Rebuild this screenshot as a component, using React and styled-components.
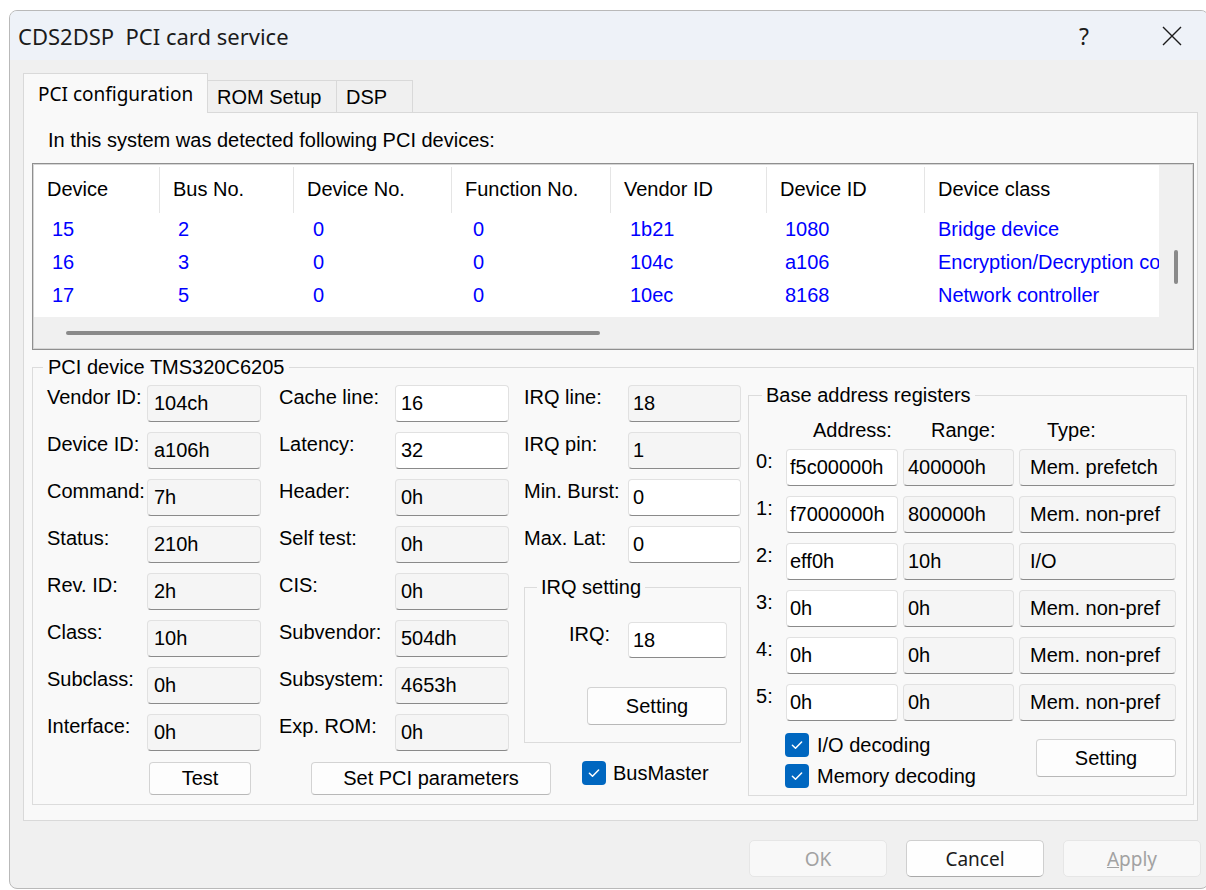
import React from "react";
import styled, { createGlobalStyle } from "styled-components";

const devices = [
  ["15", "2", "0", "0", "1b21", "1080", "Bridge device"],
  ["16", "3", "0", "0", "104c", "a106", "Encryption/Decryption controller"],
  ["17", "5", "0", "0", "10ec", "8168", "Network controller"],
];

const listColumns = [
  { title: "Device", width: 126, pad: 18 },
  { title: "Bus No.", width: 134, pad: 18 },
  { title: "Device No.", width: 158, pad: 19 },
  { title: "Function No.", width: 159, pad: 21 },
  { title: "Vendor ID", width: 156, pad: 19 },
  { title: "Device ID", width: 158, pad: 18 },
  { title: "Device class", width: 420, pad: 13 },
];

const configColumns = [
  {
    labelWidth: 100,
    fieldWidth: 114,
    rows: [
      ["Vendor ID:", "104ch"],
      ["Device ID:", "a106h"],
      ["Command:", "7h"],
      ["Status:", "210h"],
      ["Rev. ID:", "2h"],
      ["Class:", "10h"],
      ["Subclass:", "0h"],
      ["Interface:", "0h"],
    ],
  },
  {
    labelWidth: 116,
    fieldWidth: 114,
    rows: [
      ["Cache line:", "16", true],
      ["Latency:", "32", true],
      ["Header:", "0h"],
      ["Self test:", "0h"],
      ["CIS:", "0h"],
      ["Subvendor:", "504dh"],
      ["Subsystem:", "4653h"],
      ["Exp. ROM:", "0h"],
    ],
  },
];

const irqRows = [
  ["IRQ line:", "18"],
  ["IRQ pin:", "1"],
  ["Min. Burst:", "0", true],
  ["Max. Lat:", "0", true],
];

const baseRegisters = [
  ["f5c00000h", "400000h", "Mem. prefetch"],
  ["f7000000h", "800000h", "Mem. non-pref"],
  ["eff0h", "10h", "I/O"],
  ["0h", "0h", "Mem. non-pref"],
  ["0h", "0h", "Mem. non-pref"],
  ["0h", "0h", "Mem. non-pref"],
];

const GlobalStyle = createGlobalStyle`
  html, body {
    margin: 0;
    padding: 0;
    background: #ffffff;
  }
  body {
    font-family: "Liberation Sans", Arial, sans-serif;
    font-size: 20px;
    color: #000;
  }
`;

const Page = styled.div`
  width: 1206px;
  height: 890px;
  box-sizing: border-box;
  padding: 10px 0 0 9px;
  overflow: hidden;
  background: #ffffff;
`;

const Window = styled.div`
  width: 1200px;
  height: 879px;
  box-sizing: border-box;
  border: 1px solid #b9b9b9;
  border-radius: 8px;
  background: #f0f0f0;
  overflow: hidden;
  display: flex;
  flex-direction: column;
`;

const TitleBar = styled.div`
  height: 49px;
  flex-shrink: 0;
  display: flex;
  align-items: center;
  background: #eef2f8;
  padding-left: 8px;
`;

const TitleText = styled.div`
  flex: 1;
  font-family: "Noto Sans", "Liberation Sans", sans-serif;
  font-size: 22px;
  white-space: pre;
  color: #1b1b1b;
`;

const CaptionButton = styled.div`
  width: 72px;
  height: 49px;
  margin-right: ${(p) => p.$gap || 0}px;
  display: flex;
  align-items: center;
  justify-content: center;
  font-family: "Noto Sans", "Liberation Sans", sans-serif;
  font-size: 23px;
  color: #1b1b1b;
`;

const Body = styled.div`
  flex: 1;
  padding: 13px 10px 0 13px;
  display: flex;
  flex-direction: column;
`;

const TabStrip = styled.div`
  height: 40px;
  display: flex;
  align-items: flex-end;
  margin-bottom: -1px;
  position: relative;
  z-index: 1;
`;

const Tab = styled.div`
  box-sizing: border-box;
  width: ${(p) => p.$w}px;
  height: ${(p) => (p.$active ? 40 : 33)}px;
  padding: ${(p) => (p.$active ? "8px 0 0 14px" : "4px 0 0 9px")};
  border: 1px solid #d9d9d9;
  border-left: ${(p) => (p.$active ? "1px solid #d9d9d9" : "none")};
  border-bottom: ${(p) => (p.$active ? "none" : "1px solid #d9d9d9")};
  background: ${(p) => (p.$active ? "#f9f9f9" : "#f0f0f0")};
  font-family: ${(p) =>
    p.$active
      ? `"Noto Sans", "Liberation Sans", sans-serif`
      : `"Liberation Sans", Arial, sans-serif`};
  font-size: ${(p) => (p.$active ? 19 : 20)}px;
  line-height: 24px;
  white-space: nowrap;
`;

const TabPanel = styled.div`
  border: 1px solid #d9d9d9;
  background: #f9f9f9;
  padding: 15px 3px 15px 8px;
  display: flex;
  flex-direction: column;
`;

const Caption = styled.div`
  padding-left: 16px;
  line-height: 24px;
  margin-bottom: 11px;
`;

const ListBox = styled.div`
  height: 187px;
  box-sizing: border-box;
  border: 1px solid #8f8f8f;
  padding: 1px;
  background: #d6d6d6;
  display: flex;
  flex-direction: column;
`;

const ListTop = styled.div`
  height: 152px;
  display: flex;
`;

const ListContent = styled.div`
  flex: 1;
  background: #ffffff;
  overflow: hidden;
`;

const ListGrid = styled.div`
  display: grid;
  grid-template-columns: ${listColumns.map((c) => `${c.width}px`).join(" ")};
  grid-auto-rows: 33px;
  grid-template-rows: 48px;
`;

const HeaderCell = styled.div`
  position: relative;
  padding-left: 13px;
  display: flex;
  align-items: center;
  white-space: nowrap;

  &::after {
    content: "";
    position: absolute;
    right: 0;
    top: 2px;
    bottom: 0;
    width: 1px;
    background: #e5e5e5;
  }
`;

const DataCell = styled.div`
  padding-left: ${(p) => p.$pad}px;
  line-height: 33px;
  color: #0000ff;
  white-space: nowrap;
`;

const VScroll = styled.div`
  width: 33px;
  background: #f0f0f0;
  display: flex;
  justify-content: center;
  padding-top: 85px;
  box-sizing: border-box;
`;

const VThumb = styled.div`
  width: 4px;
  height: 34px;
  border-radius: 2px;
  background: #8a8a8a;
`;

const HScroll = styled.div`
  flex: 1;
  background: #f0f0f0;
  padding: 14px 0 0 32px;
  box-sizing: border-box;
`;

const HThumb = styled.div`
  width: 534px;
  height: 4px;
  border-radius: 2px;
  background: #8a8a8a;
`;

const GroupBox = styled.fieldset`
  margin: ${(p) => p.$margin || 0};
  padding: ${(p) => p.$pad};
  width: ${(p) => (p.$w ? `${p.$w}px` : "auto")};
  box-sizing: border-box;
  border: 1px solid #dcdcdc;
  min-width: 0;
  flex-shrink: 0;
`;

const GroupTitle = styled.legend`
  padding: 0 ${(p) => p.$padX || 4}px;
  margin-left: ${(p) => p.$offset}px;
  line-height: 24px;
  font-size: 20px;
  white-space: nowrap;
`;

const DeviceArea = styled.div`
  display: flex;
  gap: 7px;
`;

const LeftArea = styled.div`
  width: 694px;
  display: flex;
  flex-direction: column;
`;

const FieldColumns = styled.div`
  display: grid;
  grid-template-columns: 232px 245px 217px;
  align-items: start;
`;

const FieldColumn = styled.div`
  display: flex;
  flex-direction: column;
  gap: 10px;
`;

const FieldRow = styled.div`
  display: flex;
  align-items: flex-start;
  justify-content: ${(p) => (p.$end ? "flex-end" : "flex-start")};
  gap: ${(p) => p.$gap || 0}px;
`;

const FieldLabel = styled.span`
  width: ${(p) => (p.$w ? `${p.$w}px` : "auto")};
  flex-shrink: 0;
  line-height: 24px;
  white-space: nowrap;
`;

const Field = styled.div`
  width: ${(p) => p.$w}px;
  height: ${(p) => p.$h || 37}px;
  flex-shrink: 0;
  box-sizing: border-box;
  padding-left: ${(p) => p.$pad || 5}px;
  border: 1px solid #e1e1e1;
  border-bottom: 1px solid #8a8a8a;
  border-radius: 4px;
  background: ${(p) => (p.$edit ? "#ffffff" : "#f5f5f5")};
  display: flex;
  align-items: center;
  white-space: nowrap;
  overflow: hidden;
`;

const PushButton = styled.button`
  width: ${(p) => p.$w}px;
  height: ${(p) => p.$h || 33}px;
  margin: ${(p) => p.$margin || 0};
  padding: 0;
  box-sizing: border-box;
  border: 1px solid #d3d3d3;
  border-bottom-color: #b8b8b8;
  border-radius: 4px;
  background: #fdfdfd;
  font-family: "Liberation Sans", Arial, sans-serif;
  font-size: 20px;
  color: #000;
  flex-shrink: 0;
`;

const ButtonRow = styled.div`
  margin-top: 11px;
  padding-left: 102px;
  display: flex;
  align-items: flex-start;
`;

const CheckRow = styled.label`
  display: flex;
  align-items: center;
  gap: ${(p) => p.$gap || 8}px;
  margin: ${(p) => p.$margin || 0};
  line-height: 24px;
  white-space: nowrap;
`;

const CheckBox = styled.span`
  width: 24px;
  height: 24px;
  flex-shrink: 0;
  border-radius: 4px;
  background: #0067c0;
  display: inline-flex;
  align-items: center;
  justify-content: center;
`;

const IrqBox = styled.div`
  display: flex;
  flex-direction: column;
  align-items: flex-end;
`;

const BarHeader = styled.div`
  display: flex;
  padding-left: 30px;
  gap: 5px;
  line-height: 24px;
  margin-bottom: 7px;
`;

const BarHeadCell = styled.div`
  width: ${(p) => p.$w}px;
  padding-left: ${(p) => p.$pad}px;
  box-sizing: border-box;
`;

const BarRows = styled.div`
  display: flex;
  flex-direction: column;
  gap: 10px;
`;

const BarFooter = styled.div`
  margin-top: 12px;
  padding-left: 29px;
  display: flex;
  align-items: flex-start;
`;

const CheckList = styled.div`
  display: flex;
  flex-direction: column;
  gap: 7px;
`;

const DialogButtons = styled.div`
  margin: 19px -3px 0 0;
  display: flex;
  justify-content: flex-end;
  gap: 19px;
`;

const DialogButton = styled.button`
  width: 138px;
  height: 37px;
  padding: 0;
  box-sizing: border-box;
  border: 1px solid ${(p) => (p.disabled ? "#e6e6e6" : "#cfcfcf")};
  border-bottom-color: ${(p) => (p.disabled ? "#e6e6e6" : "#a9a9a9")};
  border-radius: 5px;
  background: ${(p) => (p.disabled ? "#f8f8f8" : "#fefefe")};
  color: ${(p) => (p.disabled ? "#a2a2a2" : "#1b1b1b")};
  font-family: "Noto Sans", "Liberation Sans", sans-serif;
  font-size: 19px;
`;

const Tick = () => (
  <svg width="16" height="16" viewBox="0 0 16 16">
    <path
      d="M3.4 8.3 L6.5 11.2 L12.6 5"
      fill="none"
      stroke="#ffffff"
      strokeWidth="1.5"
      strokeLinecap="round"
      strokeLinejoin="round"
    />
  </svg>
);

const Check = ({ children, gap, margin }) => (
  <CheckRow $gap={gap} $margin={margin}>
    <CheckBox>
      <Tick />
    </CheckBox>
    {children}
  </CheckRow>
);

const CloseGlyph = () => (
  <svg width="20" height="20" viewBox="0 0 20 20">
    <path d="M1 1 L19 19 M19 1 L1 19" stroke="#1b1b1b" strokeWidth="1.4" />
  </svg>
);

const DeviceList = () => (
  <ListBox>
    <ListTop>
      <ListContent>
        <ListGrid>
          {listColumns.map((c) => (
            <HeaderCell key={c.title}>{c.title}</HeaderCell>
          ))}
          {devices.map((row) =>
            row.map((value, i) => (
              <DataCell key={`${row[0]}-${i}`} $pad={listColumns[i].pad}>
                {value}
              </DataCell>
            ))
          )}
        </ListGrid>
      </ListContent>
      <VScroll>
        <VThumb />
      </VScroll>
    </ListTop>
    <HScroll>
      <HThumb />
    </HScroll>
  </ListBox>
);

const BaseAddressGroup = () => (
  <GroupBox $w={439} $pad="11px 9px 7px 7px" $margin="-2px 0 0 0">
    <GroupTitle $offset={6}>Base address registers</GroupTitle>
    <BarHeader>
      <BarHeadCell $w={112} $pad={27}>Address:</BarHeadCell>
      <BarHeadCell $w={111} $pad={28}>Range:</BarHeadCell>
      <BarHeadCell $w={157} $pad={28}>Type:</BarHeadCell>
    </BarHeader>
    <BarRows>
      {baseRegisters.map(([addr, range, type], i) => (
        <FieldRow key={i} $gap={5}>
          <FieldLabel $w={25}>{i}:</FieldLabel>
          <Field $w={112} $edit $pad={3}>
            {addr}
          </Field>
          <Field $w={111} $pad={4}>{range}</Field>
          <Field $w={157} $pad={10}>{type}</Field>
        </FieldRow>
      ))}
    </BarRows>
    <BarFooter>
      <CheckList>
        <Check>I/O decoding</Check>
        <Check>Memory decoding</Check>
      </CheckList>
      <PushButton $w={140} $h={38} $margin="6px 1px 0 auto">
        Setting
      </PushButton>
    </BarFooter>
  </GroupBox>
);

export default function App() {
  return (
    <Page>
      <GlobalStyle />
      <Window>
        <TitleBar>
          <TitleText>CDS2DSP  PCI card service</TitleText>
          <CaptionButton $gap={16}>?</CaptionButton>
          <CaptionButton>
            <CloseGlyph />
          </CaptionButton>
        </TitleBar>
        <Body>
          <TabStrip>
            <Tab $active $w={185}>
              PCI configuration
            </Tab>
            <Tab $w={129}>ROM Setup</Tab>
            <Tab $w={76}>DSP</Tab>
          </TabStrip>
          <TabPanel>
            <Caption>In this system was detected following PCI devices:</Caption>
            <DeviceList />
            <GroupBox $pad="6px 7px 8px 14px" $margin="5px 0 0 0">
              <GroupTitle $offset={-4} $padX={5}>
                PCI device TMS320C6205
              </GroupTitle>
              <DeviceArea>
                <LeftArea>
                  <FieldColumns>
                    {configColumns.map((col, ci) => (
                      <FieldColumn key={ci}>
                        {col.rows.map(([label, value, edit]) => (
                          <FieldRow key={label}>
                            <FieldLabel $w={col.labelWidth}>{label}</FieldLabel>
                            <Field $w={col.fieldWidth} $edit={edit} $pad={ci ? 5 : 6}>
                              {value}
                            </Field>
                          </FieldRow>
                        ))}
                      </FieldColumn>
                    ))}
                    <FieldColumn>
                      {irqRows.map(([label, value, edit]) => (
                        <FieldRow key={label}>
                          <FieldLabel $w={104}>{label}</FieldLabel>
                          <Field $w={113} $edit={edit} $pad={4}>
                            {value}
                          </Field>
                        </FieldRow>
                      ))}
                      <GroupBox $pad="23px 13px 17px 13px" $margin="2px 0 0 0">
                        <GroupTitle $offset={-1}>IRQ setting</GroupTitle>
                        <IrqBox>
                          <FieldRow $end $gap={18}>
                            <FieldLabel>IRQ:</FieldLabel>
                            <Field $w={99} $h={36} $edit $pad={4}>
                              18
                            </Field>
                          </FieldRow>
                          <PushButton $w={140} $h={38} $margin="29px 0 0 0">
                            Setting
                          </PushButton>
                        </IrqBox>
                      </GroupBox>
                    </FieldColumn>
                  </FieldColumns>
                  <ButtonRow>
                    <PushButton $w={102}>Test</PushButton>
                    <PushButton $w={240} $margin="0 0 0 60px">
                      Set PCI parameters
                    </PushButton>
                    <Check gap={7} margin="-1px 0 0 31px">
                      BusMaster
                    </Check>
                  </ButtonRow>
                </LeftArea>
                <BaseAddressGroup />
              </DeviceArea>
            </GroupBox>
          </TabPanel>
          <DialogButtons>
            <DialogButton disabled>OK</DialogButton>
            <DialogButton>Cancel</DialogButton>
            <DialogButton disabled>
              <u>A</u>pply
            </DialogButton>
          </DialogButtons>
        </Body>
      </Window>
    </Page>
  );
}
